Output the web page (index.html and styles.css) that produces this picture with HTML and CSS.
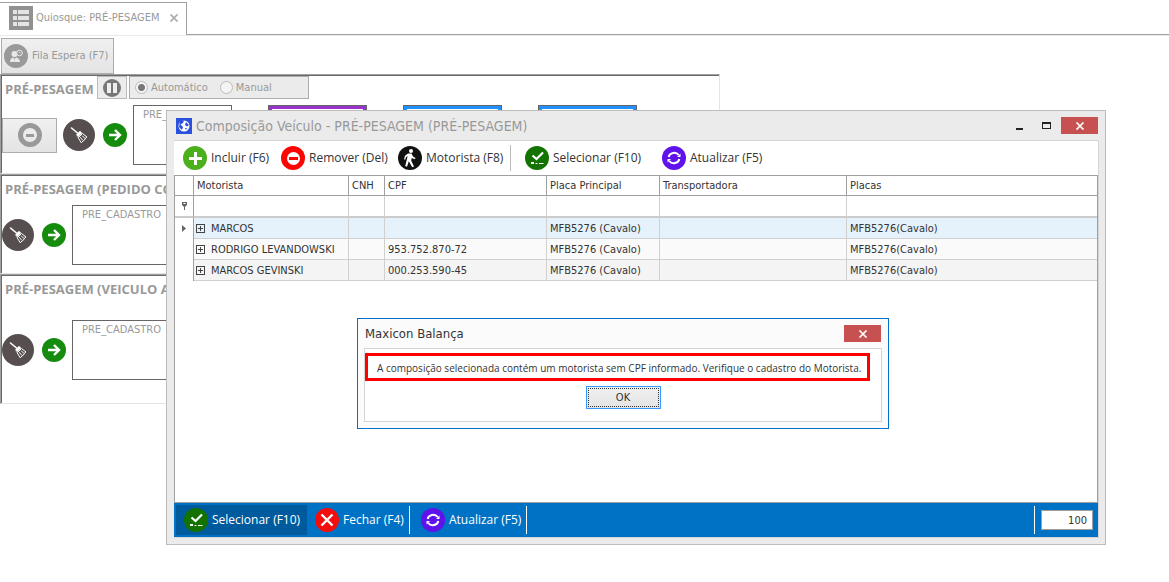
FILE: index.html
```html
<!DOCTYPE html>
<html lang="pt-BR">
  <head>
    <meta charset="UTF-8" />
    <meta name="viewport" content="width=device-width, initial-scale=1.0" />
    <title>Maxicon Balança</title>
    <link rel="stylesheet" href="styles.css">
  </head>
  <body>
    <!-- shared icons -->
    <svg class="sprite" aria-hidden="true">
      <symbol id="i-broom" viewBox="0 0 32 32">
        <circle cx="16" cy="16" r="16" fill="#574f4f" />
        <g fill="none" stroke="#fff" stroke-linecap="round" stroke-linejoin="round">
          <path d="M8.500 9l6 5" stroke-width="1.600" />
          <path d="M13.500 15.500l3.500-3.500 2 2-4 4z" fill="#fff" stroke-width=".4" />
          <path d="M15.500 18.500l4-4 4.500 3.500-1.500 1-1 2-1.500 1-1.500 1.500z" stroke-width="1" />
          <path d="M17.500 18.500l2 2.500M19.500 17l2 2" stroke-width="1" />
        </g>
      </symbol>
      <symbol id="i-go" viewBox="0 0 24 24">
        <circle cx="12" cy="12" r="12" fill="#168c0e" />
        <path d="M6 12h11M12 7l5 5-5 5" fill="none" stroke="#fff" stroke-width="2.400" />
      </symbol>
      <symbol id="i-select" viewBox="0 0 24 24">
        <circle cx="12" cy="12" r="12" fill="#137300" />
        <path d="M7.500 9.500l4 3.500 6.500-6.500" fill="none" stroke="#fff" stroke-width="2.200" />
        <path d="M6 16h3v2H6zM10.500 17h2v1h-2zM14 17h4.500v1H14z" fill="#fff" />
      </symbol>
      <symbol id="i-refresh" viewBox="0 0 24 24">
        <circle cx="12" cy="12" r="12" fill="#5f12ea" />
        <path d="M6.700 11a5.500 5 0 0 1 10-2M17.300 13a5.500 5 0 0 1-10 2" fill="none" stroke="#fff" stroke-width="2" />
        <path d="M18.500 7.500v3.500h-3.500zM5.500 16.500V13H9z" fill="#fff" />
      </symbol>
      <symbol id="i-x" viewBox="0 0 10 8">
        <path d="M1.500.5l7 7M8.500.5l-7 7" fill="none" stroke="currentColor" stroke-width="1.700" />
      </symbol>
    </svg>

    <header class="tabs">
      <div class="tab">
        <svg width="24" height="24" viewBox="0 0 24 24">
          <path d="M0 0h24v24H0z" fill="#919191" />
          <path d="M4 4h4v4H4zM9 4h11v4H9zM4 10h4v4H4zM9 10h11v4H9zM4 16h4v4H4zM9 16h11v4H9z" fill="#e4e4e4" />
        </svg>
        <span>Quiosque: PRÉ-PESAGEM</span>
        <button class="tab-close" type="button" aria-label="Fechar aba"><svg width="10" height="8"><use href="#i-x" /></svg></button>
      </div>
    </header>

    <main class="kiosk">
      <button class="queue-btn" type="button">
        <svg width="24" height="24" viewBox="0 0 24 24">
          <circle cx="12" cy="12" r="12" fill="#999" />
          <circle cx="10.500" cy="10" r="3" fill="#e8e8e8" />
          <path d="M6 18c0-3 2-4.500 3-4.500l1.500 1.500 1.500-1.500c1.500 0 4 1.500 4 4.500z" fill="#e8e8e8" />
          <circle cx="15.500" cy="9" r="2.800" fill="#999" stroke="#e8e8e8" />
          <path d="M15.500 7.500V9H17M10.500 15v3" fill="none" stroke="#d0d0d0" stroke-width=".8" />
        </svg>
        Fila Espera (F7)
      </button>

      <section class="panel">
        <div class="panel-head">
          <h2>PRÉ-PESAGEM</h2>
          <button class="pause-btn" type="button" aria-label="Pausar">
            <svg width="18" height="18" viewBox="0 0 18 18">
              <circle cx="9" cy="9" r="9" fill="#777" />
              <path d="M4 4h4v10H4zM10 4h4v10h-4z" fill="#eee" />
            </svg>
          </button>
          <div class="mode">
            <label><input type="radio" name="mode" checked /> Automático</label>
            <label><input type="radio" name="mode" /> Manual</label>
          </div>
        </div>
        <div class="panel-row">
          <button class="block-btn" type="button" aria-label="Bloquear">
            <svg width="24" height="24" viewBox="0 0 24 24">
              <circle cx="12" cy="12" r="9.500" fill="none" stroke="#999" stroke-width="5" />
              <path d="M8 11h8v3H8z" fill="#999" />
            </svg>
          </button>
          <button class="round" type="button" aria-label="Limpar"><svg width="32" height="32"><use href="#i-broom" /></svg></button>
          <button class="round" type="button" aria-label="Avançar"><svg width="24" height="24"><use href="#i-go" /></svg></button>
          <div class="steps">
            <div class="step">PRE_CADASTRO</div>
            <div class="step purple"></div>
            <div class="step blue"></div>
            <div class="step blue"></div>
          </div>
        </div>
      </section>

      <section class="panel">
        <div class="panel-head"><h2>PRÉ-PESAGEM (PEDIDO CO</h2></div>
        <div class="panel-row">
          <button class="round" type="button" aria-label="Limpar"><svg width="32" height="32"><use href="#i-broom" /></svg></button>
          <button class="round" type="button" aria-label="Avançar"><svg width="24" height="24"><use href="#i-go" /></svg></button>
          <div class="steps"><div class="step">PRE_CADASTRO</div></div>
        </div>
      </section>

      <section class="panel tall">
        <div class="panel-head"><h2>PRÉ-PESAGEM (VEICULO A</h2></div>
        <div class="panel-row">
          <button class="round" type="button" aria-label="Limpar"><svg width="32" height="32"><use href="#i-broom" /></svg></button>
          <button class="round" type="button" aria-label="Avançar"><svg width="24" height="24"><use href="#i-go" /></svg></button>
          <div class="steps"><div class="step">PRE_CADASTRO</div></div>
        </div>
      </section>
    </main>

    <div class="window" role="dialog" aria-labelledby="window-title">
      <div class="titlebar">
        <svg width="16" height="16" viewBox="0 0 16 16">
          <path d="M0 0h16v16H0z" fill="#2b50dd" />
          <circle cx="8" cy="8" r="5.500" fill="#fff" />
          <path d="M4 3l4-.5L7 5 4.500 6.500 7 9l-1 3-3-3zM10 4l3 3-2 1.500L9 7zM9 10l2 0-1 2z" fill="#2b50dd" />
        </svg>
        <h1 id="window-title">Composição Veículo - PRÉ-PESAGEM (PRÉ-PESAGEM)</h1>
        <button class="win-btn" type="button" aria-label="Minimizar"><svg width="10" height="8"><path d="M2 6h7v2H2z" fill="#222" /></svg></button>
        <button class="win-btn" type="button" aria-label="Maximizar"><svg width="10" height="8"><path d="M1 0h9v7H1zM2 2v4h7V2z" fill="#222" fill-rule="evenodd" /></svg></button>
        <button class="close-btn" type="button" aria-label="Fechar"><svg width="10" height="8"><use href="#i-x" /></svg></button>
      </div>

      <div class="window-body">
        <div class="toolbar">
          <button type="button">
            <svg width="24" height="24" viewBox="0 0 24 24"><circle cx="12" cy="12" r="12" fill="#4caf1c" /><path d="M12.500 6v13M6 12.500h13" stroke="#fff" stroke-width="3" /></svg>
            Incluir (F6)
          </button>
          <button type="button">
            <svg width="24" height="24" viewBox="0 0 24 24"><circle cx="12" cy="12" r="12" fill="#fb0505" /><circle cx="12.500" cy="12.500" r="6.500" fill="#fff" /><path d="M8 11h9v3H8z" fill="#fb0505" /></svg>
            Remover (Del)
          </button>
          <button type="button">
            <svg width="24" height="24" viewBox="0 0 24 24">
              <circle cx="12" cy="12" r="12" fill="#111" />
              <circle cx="13" cy="5" r="2" fill="#fff" />
              <path d="M10 7.500l3.500 0 1.500 3 2.500 1.500-.7 1.200-3-1.200-.6 2.500 2.800 6-1.800.8-3.400-6-1.800 5.500-1.800-.8 2-8 .3-2-1.500 1.300-.8 2.500-1.200-.5 1-3.500z" fill="#fff" />
            </svg>
            Motorista (F8)
          </button>
          <span class="split"></span>
          <button type="button"><svg width="24" height="24"><use href="#i-select" /></svg> Selecionar (F10)</button>
          <button type="button"><svg width="24" height="24"><use href="#i-refresh" /></svg> Atualizar (F5)</button>
        </div>

        <div class="grid">
          <table>
            <colgroup>
              <col class="c-mark" /><col class="c-driver" /><col class="c-cnh" /><col class="c-cpf" /><col class="c-plate" /><col class="c-carrier" /><col />
            </colgroup>
            <thead>
              <tr>
                <th></th>
                <th>Motorista</th>
                <th>CNH</th>
                <th>CPF</th>
                <th>Placa Principal</th>
                <th>Transportadora</th>
                <th>Placas</th>
              </tr>
            </thead>
            <tbody>
              <tr class="filter">
                <td class="mark"><svg width="5" height="8" viewBox="0 0 5 8"><path d="M0 0h5v3L3 5v3H2V5L0 3z" fill="#666" /><path d="M1.500 1h2v1h-2z" fill="#fff" /></svg></td>
                <td><input type="text" aria-label="Filtrar motorista" /></td>
                <td><input type="text" aria-label="Filtrar CNH" /></td>
                <td><input type="text" aria-label="Filtrar CPF" /></td>
                <td><input type="text" aria-label="Filtrar placa principal" /></td>
                <td><input type="text" aria-label="Filtrar transportadora" /></td>
                <td><input type="text" aria-label="Filtrar placas" /></td>
              </tr>
              <tr class="selected">
                <td class="mark"><svg width="4" height="7" viewBox="0 0 4 7"><path d="M0 0l4 3.500L0 7z" fill="#666" /></svg></td>
                <td><button class="expand" type="button" aria-label="Expandir"></button>MARCOS</td>
                <td></td>
                <td></td>
                <td>MFB5276 (Cavalo)</td>
                <td></td>
                <td>MFB5276(Cavalo)</td>
              </tr>
              <tr>
                <td class="mark"></td>
                <td><button class="expand" type="button" aria-label="Expandir"></button>RODRIGO LEVANDOWSKI</td>
                <td></td>
                <td>953.752.870-72</td>
                <td>MFB5276 (Cavalo)</td>
                <td></td>
                <td>MFB5276(Cavalo)</td>
              </tr>
              <tr class="odd">
                <td class="mark"></td>
                <td><button class="expand" type="button" aria-label="Expandir"></button>MARCOS GEVINSKI</td>
                <td></td>
                <td>000.253.590-45</td>
                <td>MFB5276 (Cavalo)</td>
                <td></td>
                <td>MFB5276(Cavalo)</td>
              </tr>
            </tbody>
          </table>
        </div>

        <div class="statusbar">
          <button class="active" type="button"><svg width="24" height="24"><use href="#i-select" /></svg> Selecionar (F10)</button>
          <button class="close-item" type="button">
            <svg width="24" height="24" viewBox="0 0 24 24"><circle cx="12" cy="12" r="12" fill="#f30d0d" /><path d="M6.500 6.500l11 11M17.500 6.500l-11 11" stroke="#fff" stroke-width="2.400" /></svg>
            Fechar (F4)
          </button>
          <span class="split"></span>
          <button class="refresh-item" type="button"><svg width="24" height="24"><use href="#i-refresh" /></svg> Atualizar (F5)</button>
          <span class="split"></span>
          <span class="split last"></span>
          <input type="text" value="100" aria-label="Quantidade de registros" />
        </div>
      </div>
    </div>

    <div class="alert" role="alertdialog" aria-labelledby="alert-title">
      <div class="alert-head">
        <h2 id="alert-title">Maxicon Balança</h2>
        <button class="close-btn" type="button" aria-label="Fechar"><svg width="10" height="8"><use href="#i-x" /></svg></button>
      </div>
      <div class="alert-body">
        <p>A composição selecionada contém um motorista sem CPF informado. Verifique o cadastro do Motorista.</p>
        <button class="ok-btn" type="button"><span>OK</span></button>
      </div>
    </div>
  </body>
</html>
```
FILE: styles.css
```css
* {
  box-sizing: border-box;
}
html,
body {
  height: 100%;
}
body {
  margin: 0;
  position: relative;
  overflow: hidden;
  background: #fff;
  color: #333;
  font: 11px/14px Tahoma, "DejaVu Sans Condensed", "DejaVu Sans", sans-serif;
}
button,
input {
  font: inherit;
  color: inherit;
  margin: 0;
}
button {
  padding: 0;
  border: 0;
  background: none;
}
h1,
h2,
p {
  margin: 0;
  font-weight: normal;
}
svg {
  display: block;
  flex: none;
}
.sprite {
  position: absolute;
  width: 0;
  height: 0;
}

/* tabs */
.tabs {
  display: flex;
  padding-top: 2px;
  border-bottom: 1px solid #e9e9e9;
  color: #999;
}
.tabs::after {
  content: "";
  flex: 1;
  border-bottom: 1px solid #a0a0a0;
}
.tab {
  display: flex;
  align-items: center;
  gap: 3px;
  width: 187px;
  height: 33px;
  padding: 0 7px 2px 9px;
  border: 1px solid #a0a0a0;
  border-width: 1px 1px 0 0;
}
.tab-close {
  margin-left: auto;
  color: #aaa;
}

/* kiosk */
.kiosk {
  display: flex;
  flex-direction: column;
  align-items: flex-start;
  padding-top: 2px;
  color: #999;
}
.queue-btn {
  display: flex;
  align-items: center;
  gap: 4px;
  width: 113px;
  height: 36px;
  margin-left: 1px;
  padding-left: 2px;
  border: 1px solid #acacac;
  background: linear-gradient(#f0f0f0, #e4e4e4);
  white-space: nowrap;
}
.panel {
  display: flex;
  flex-direction: column;
  width: 100%;
  max-width: 720px;
  height: 100px;
  padding: 1px 0 0 1px;
  border: 1px solid;
  border-color: #a0a0a0 #e3e3e3 #e3e3e3 #a0a0a0;
  box-shadow: inset 1px 1px #696969;
}
.panel.tall {
  height: 130px;
}
.panel-head {
  display: flex;
  height: 23px;
  gap: 2px;
}
.panel-head h2 {
  min-width: 93px;
  padding-left: 3px;
  font: bold 13px/26px "Segoe UI", "Open Sans", "Noto Sans", sans-serif;
  white-space: nowrap;
}
.pause-btn {
  display: flex;
  align-items: center;
  justify-content: center;
  width: 30px;
  border: 1px solid #bbb;
  background: #ececec;
}
.mode {
  display: flex;
  align-items: center;
  gap: 12px;
  width: 180px;
  padding-left: 5px;
  border: 1px solid #acacac;
  background: #ebebeb;
}
.mode label {
  display: flex;
  align-items: center;
  gap: 3px;
}
.mode input {
  appearance: none;
  width: 13px;
  height: 13px;
  border: 1px solid #bbb;
  border-radius: 50%;
  background: #f4f4f4;
}
.mode input:checked {
  background: radial-gradient(#777 3px, #f4f4f4 4px);
}
.panel-row {
  display: flex;
  flex: 1;
  align-items: center;
  gap: 6px;
  padding-bottom: 2px;
}
.block-btn {
  display: flex;
  align-items: center;
  justify-content: center;
  width: 55px;
  height: 35px;
  border: 1px solid #acacac;
  background: linear-gradient(#f0f0f0, #e4e4e4);
}
.round + .round {
  margin-left: 2px;
}
.steps {
  display: flex;
  gap: 36px;
}
.step {
  width: 99px;
  height: 60px;
  padding-top: 2px;
  border: 1px solid #666;
  text-align: center;
}
.step.purple {
  box-shadow: inset 0 0 0 3px #9a32cd;
}
.step.blue {
  box-shadow: inset 0 0 0 3px #1e90ff;
}

/* main window */
.window {
  position: absolute;
  top: 110px;
  right: 63px;
  bottom: 37px;
  left: 166px;
  display: flex;
  flex-direction: column;
  padding: 0 6px 6px 7px;
  border: 1px solid #bcbcbc;
  background: #ebebeb;
}
.titlebar {
  display: flex;
  align-items: center;
  height: 29px;
  padding: 0 1px 0 2px;
}
.titlebar h1 {
  flex: 1;
  margin-left: 4px;
  color: #999;
  font-size: 14px;
  line-height: 20px;
}
.win-btn {
  display: flex;
  justify-content: center;
  width: 27px;
}
.close-btn {
  display: flex;
  align-items: center;
  justify-content: center;
  width: 37px;
  height: 17px;
  background: #c75050;
  color: #fff;
}
.titlebar .close-btn {
  margin-left: 2px;
}
.window-body {
  display: flex;
  flex: 1;
  flex-direction: column;
  border: 1px solid #d5d5d5;
  border-left-width: 0;
  background: #fff;
}
.toolbar,
.statusbar {
  display: flex;
  align-items: center;
  font: 12px/16px "Segoe UI", "Open Sans", "Noto Sans", sans-serif;
}
.toolbar {
  height: 34px;
  padding-left: 9px;
}
.toolbar button,
.statusbar button {
  display: flex;
  align-items: center;
  gap: 4px;
  white-space: nowrap;
}
.toolbar button {
  width: 112px;
}
.toolbar button:first-child {
  width: 98px;
}
.toolbar button:nth-child(2) {
  width: 117px;
}
.toolbar .split + button {
  width: 137px;
}
.split {
  width: 1px;
  height: 26px;
  background: #bbb;
}
.toolbar .split {
  margin-right: 14px;
}

/* grid */
.grid {
  flex: 1;
  border: 1px solid #a0a0a0;
}
table {
  width: 100%;
  table-layout: fixed;
  border-collapse: separate;
  border-spacing: 0;
}
.c-mark {
  width: 19px;
}
.c-driver {
  width: 155px;
}
.c-cnh {
  width: 36px;
}
.c-cpf {
  width: 162px;
}
.c-plate {
  width: 113px;
}
.c-carrier {
  width: 187px;
}
th,
td {
  height: 21px;
  padding: 0 3px;
  border: 0 solid #d0d0d0;
  border-width: 0 1px 1px 0;
  font-weight: normal;
  text-align: left;
  white-space: nowrap;
}
td {
  padding-top: 1px;
}
th {
  height: 20px;
  border-color: #a0a0a0;
}
th:last-child,
td:last-child {
  border-right: 0;
}
td.mark {
  padding: 0;
  border-right-color: #a0a0a0;
  border-bottom: 0;
  background: #fff;
}
.mark + td {
  padding-left: 2px;
}
.mark svg {
  margin: 0 auto;
}
.filter td,
.filter td.mark {
  height: 22px;
  border-bottom: 2px solid #ccc;
}
.filter input {
  display: block;
  width: 100%;
  height: 18px;
  padding: 0;
  border: 0;
  outline: 0;
}
tbody tr {
  background: #fafafa;
}
tbody tr.filter {
  background: #fff;
}
tbody tr.selected {
  background: #e5f1fb;
}
tbody tr.odd {
  background: #f4f4f4;
}
.expand {
  width: 9px;
  height: 9px;
  margin-right: 6px;
  border: 1px solid #444;
  background:
    linear-gradient(#444, #444) center / 5px 1px no-repeat,
    linear-gradient(#444, #444) center / 1px 5px no-repeat;
}

/* status bar */
.statusbar {
  height: 34px;
  padding: 0 5px 0 2px;
  background: #0072c6;
  color: #fff;
}
.statusbar .active {
  width: 131px;
  height: 30px;
  padding-left: 8px;
  background: #005a9e;
}
.statusbar .close-item {
  width: 102px;
  padding-left: 8px;
}
.statusbar .refresh-item {
  width: 116px;
  padding-left: 11px;
}
.statusbar .split {
  height: 28px;
  background: #fff;
}
.statusbar .last {
  margin-left: auto;
}
.statusbar input {
  width: 52px;
  height: 20px;
  margin-left: 6px;
  padding: 0 5px;
  border: 1px solid #a0a0a0;
  color: #333;
  font: 11px/14px Tahoma, "DejaVu Sans Condensed", "DejaVu Sans", sans-serif;
  text-align: right;
}

/* message box */
.alert {
  position: absolute;
  top: 318px;
  left: 357px;
  width: 532px;
  padding: 0 6px 6px;
  border: 1px solid #0072c6;
  background: #fbfbfb;
}
.alert-head {
  display: flex;
  align-items: center;
  justify-content: space-between;
  height: 29px;
  padding: 0 1px;
}
.alert-head h2 {
  font-size: 13px;
  line-height: 18px;
}
.alert-body {
  display: flex;
  flex-direction: column;
  align-items: center;
  height: 74px;
  padding-top: 4px;
  border: 1px solid #d5d5d5;
  background: #fff;
}
.alert-body p {
  align-self: flex-start;
  width: 505px;
  height: 28px;
  padding-left: 9px;
  border: 3px solid red;
  font: 10px/24px "Segoe UI", "Open Sans", "Noto Sans", sans-serif;
  white-space: nowrap;
}
.ok-btn {
  width: 75px;
  height: 23px;
  margin-top: 5px;
  padding: 1px;
  border: 1px solid #3399ff;
  background: linear-gradient(#f0f0f0, #e4e4e4);
}
.ok-btn span {
  display: block;
  height: 19px;
  border: 1px dotted #333;
  line-height: 18px;
}
```
